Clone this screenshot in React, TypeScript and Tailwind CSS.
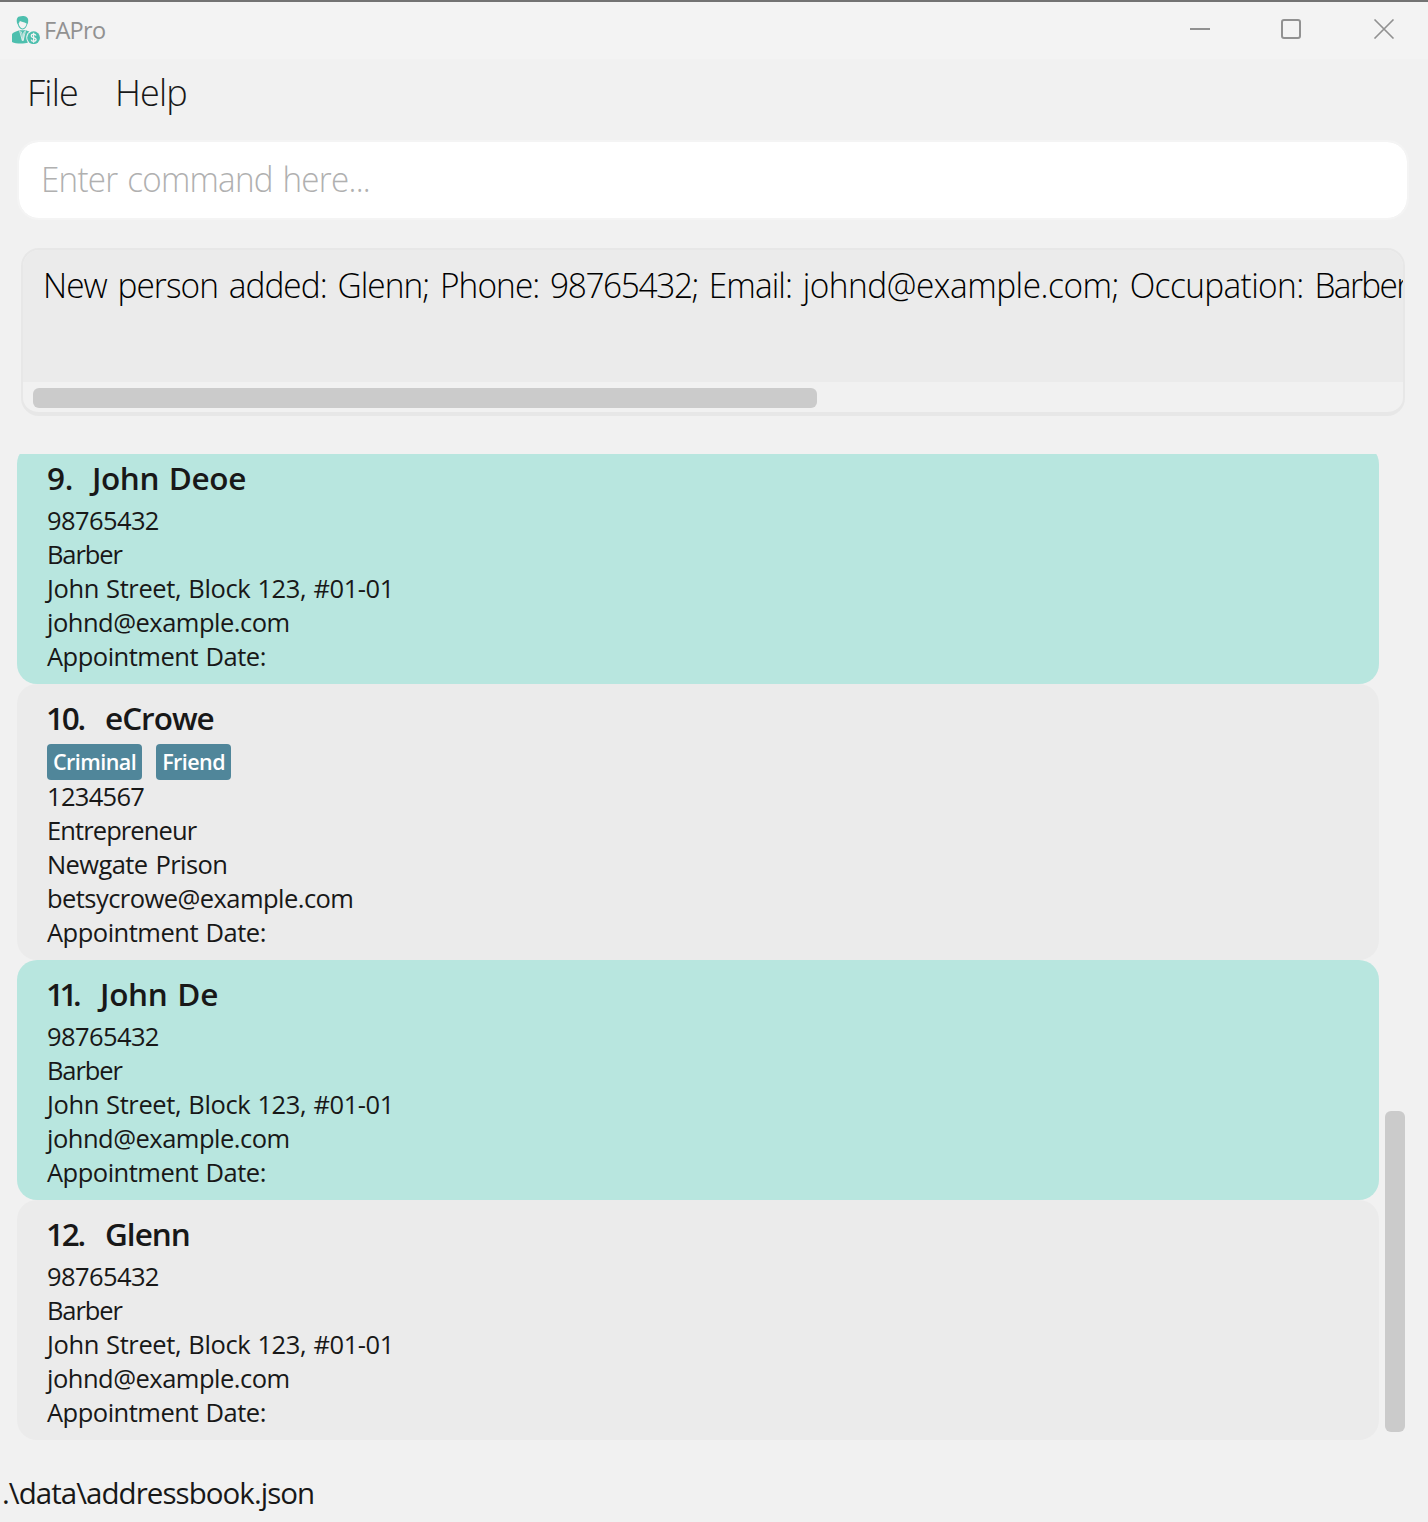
import React from "react";

type Person = {
  index: number;
  name: string;
  tags?: string[];
  lines: string[];
  indexClass: string;
  nameClass: string;
};

const contact = ["98765432", "Barber", "John Street, Block 123, #01-01", "johnd@example.com", "Appointment Date:"];

const people: Person[] = [
  { index: 9, name: "John Deoe", indexClass: "w-[45px] tracking-[-0.3px]", nameClass: "tracking-[-0.4px]", lines: contact },
  {
    index: 10,
    name: "eCrowe",
    indexClass: "-ml-px mr-px w-[58px] tracking-[-2.3px]",
    nameClass: "tracking-[-1px]",
    tags: ["Criminal", "Friend"],
    lines: ["1234567", "Entrepreneur", "Newgate Prison", "betsycrowe@example.com", "Appointment Date:"],
  },
  { index: 11, name: "John De", indexClass: "-ml-px mr-px w-[53px] tracking-[-4.5px]", nameClass: "tracking-[-0.3px]", lines: contact },
  { index: 12, name: "Glenn", indexClass: "-ml-px mr-px w-[58px] tracking-[-2.3px]", nameClass: "tracking-[-1px]", lines: contact },
];

const lineSpacing: Record<string, string> = {
  "98765432": "tracking-[-0.6px]",
  "1234567": "tracking-[-0.7px]",
  Barber: "tracking-[-1.1px]",
  Entrepreneur: "tracking-[-0.9px]",
  "Newgate Prison": "tracking-[-0.6px] [word-spacing:2px]",
  "John Street, Block 123, #01-01": "tracking-[-0.4px] [word-spacing:1px]",
  "johnd@example.com": "tracking-[-0.5px]",
  "betsycrowe@example.com": "tracking-[-0.55px]",
  "Appointment Date:": "tracking-[-0.5px] [word-spacing:1.5px]",
};

function AppIcon() {
  return (
    <svg width="28" height="29" viewBox="0 0 28 29" fill="#4dbfae">
      <path d="M4.700 5.800C4.600 3 6 1.600 7.500 1.500 9.500.6 13 .7 14.500 2c1.600 1 2 2.700 1.600 5.200-.1 1.200-.4 1.700-.9 2.300-.8 2.700-2.400 5-4.700 5-2.300 0-4-2.300-4.700-5C5 8.600 4.800 7.200 4.700 5.800z" />
      <path d="M6.600 8.300c.8-.5 1-1.200 1.200-2.200 1.800 1.100 3.900.8 6.800 2.400-.5 2.700-2.100 4.900-4 4.900-2 0-3.600-2.400-4-5.100z" fill="#f3f3f3" />
      <path d="M0 19.500c.3-1.800 3.500-2.700 7.500-4.300h6.400c1.300.6 2.500 1 3.600 1.400-3.600 2-4.200 7.300-1.500 10.900-4 1.500-12.500 1.300-16-.6z" />
      <path d="M7.500 15.500l2.900 10.200L10 18.800l-1.200-2.500M13.500 15.500l-2.400 10.200.3-6.900 1.100-2.500" fill="none" stroke="#f3f3f3" strokeWidth=".8" />
      <circle cx="21.600" cy="22.700" r="6.400" />
      <path d="M23.900 20.600c-.3-1-1.200-1.400-2.300-1.400-1.300 0-2.300.6-2.300 1.700 0 2.500 4.800 1.100 4.800 3.700 0 1.100-1.100 1.700-2.400 1.700-1.400 0-2.300-.6-2.500-1.700M21.600 17.800v9.900" fill="none" stroke="#f3f3f3" strokeWidth="1.300" />
    </svg>
  );
}

function TitleBar() {
  return (
    <header className="flex h-[59px] shrink-0 items-center border-t-2 border-[#737373] bg-[#f3f3f3] pb-[2px] pl-3">
      <AppIcon />
      <span className="ml-1 flex-1 text-[23.5px] leading-8 tracking-[-0.7px] text-[#919191]">FAPro</span>
      <svg width="206" height="20" viewBox="0 0 206 20" className="mr-[32px] mt-[-1px]" fill="none" stroke="#919191" strokeWidth="2">
        <path d="M0 10h20" />
        <rect x="92" y="1" width="18" height="18" rx="2" />
        <path d="M184.500.5l19 19M203.500.5l-19 19" strokeWidth="1.600" />
      </svg>
    </header>
  );
}

function PersonCard({ person, tinted }: { person: Person; tinted: boolean }) {
  return (
    <article className={`shrink-0 rounded-[20px] pt-3 pb-[11px] pl-[30px] ${tinted ? "bg-[#b8e6df]" : "bg-[#ebebeb]"}`}>
      <h2 className="flex h-[47px] text-[31.5px] leading-[44px] font-semibold">
        <span className={`shrink-0 ${person.indexClass}`}>{person.index}.</span>
        <span className={`[word-spacing:2px] ${person.nameClass}`}>{person.name}</span>
      </h2>
      {person.tags && (
        <div className="mt-px mb-[-1px] flex gap-[14px]">
          {person.tags.map((tag) => (
            <span key={tag} className="h-9 rounded-[4px] bg-[#50869a] px-[6px] text-[21.5px] leading-9 font-semibold tracking-[-0.55px] text-white">
              {tag}
            </span>
          ))}
        </div>
      )}
      {person.lines.map((line) => (
        <p key={line} className={`h-[34px] text-[25.5px] leading-[34px] whitespace-nowrap ${lineSpacing[line]}`}>
          {line}
        </p>
      ))}
    </article>
  );
}

export default function App() {
  return (
    <div className="flex h-[1522px] w-[1428px] flex-col overflow-hidden bg-[#f1f1f1] font-['Open_Sans',sans-serif] text-[#181818]">
      <TitleBar />
      <nav className="flex h-[83px] shrink-0 gap-[37px] pl-[27px] pt-[9px] text-[36px] leading-[50px] font-light tracking-[-0.8px]">
        <span>File</span>
        <span>Help</span>
      </nav>
      <div className="mr-[21px] ml-[19px] flex h-[76px] shrink-0 items-center rounded-[20px] bg-white pb-[2px] pl-[22px] text-[35.5px] font-light tracking-[-0.8px] text-[#b0b0b0] outline-2 outline-[#f4f4f4]">
        <span className="origin-left scale-x-[0.935] [word-spacing:2px]">Enter command here...</span>
      </div>
      <section className="mt-[30px] mr-[23px] ml-[21px] flex h-[168px] shrink-0 flex-col overflow-hidden rounded-[18px] border-2 border-b-4 border-[#e7e7e7]">
        <div className="h-[132px] shrink-0 overflow-hidden bg-[#ebebeb] pl-[20px] pt-[9px] text-[35.5px] leading-[50px] font-light whitespace-nowrap text-black">
          <p className="w-max origin-left scale-x-[0.941] tracking-[-0.97px] [word-spacing:3px]">
            New person added: Glenn; Phone: <span className="tracking-[-1.45px]">98765432;</span> Email:{" "}
            <span className="tracking-[-0.5px]">johnd@example.com;</span> <span className="tracking-[-0.65px]">Occupation: </span>
            <span className="tracking-[-1.7px]">Barber</span>
          </p>
        </div>
        <div className="mt-[6px] ml-[10px] h-5 w-[784px] shrink-0 rounded-[6px] bg-[#cbcbcb]" />
      </section>
      <main className="mt-[38px] ml-[17px] flex h-[986px] shrink-0">
        <div className="flex w-[1362px] flex-col justify-end overflow-hidden">
          {people.map((person, i) => (
            <PersonCard key={person.index} person={person} tinted={i % 2 === 0} />
          ))}
        </div>
        <div className="mt-[657px] ml-[6px] h-[321px] w-5 rounded-[6px] bg-[#cbcbcb]" />
      </main>
      <footer className="mt-[33px] pl-[2px] text-[29.5px] leading-[40px] tracking-[-0.95px]">.\data\addressbook.json</footer>
    </div>
  );
}
